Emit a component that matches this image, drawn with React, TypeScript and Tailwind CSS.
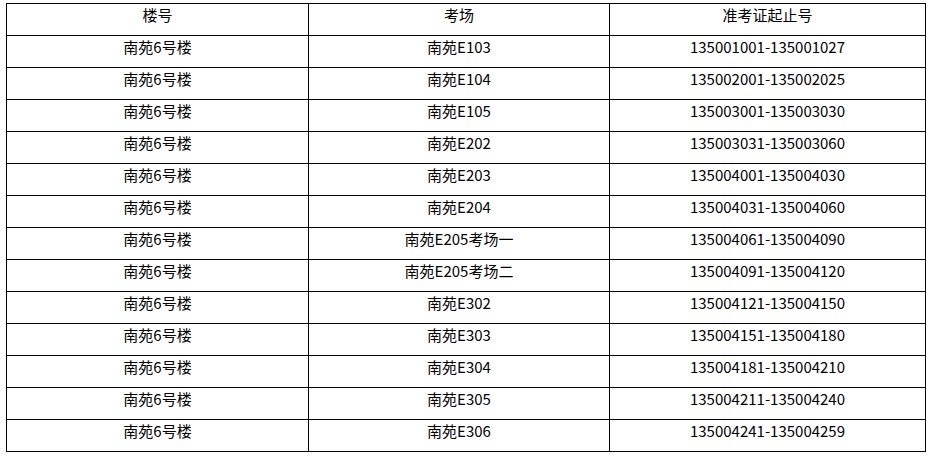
import React from "react";

const rows: [string, string, string][] = [
  ["南苑6号楼", "南苑E103", "135001001-135001027"],
  ["南苑6号楼", "南苑E104", "135002001-135002025"],
  ["南苑6号楼", "南苑E105", "135003001-135003030"],
  ["南苑6号楼", "南苑E202", "135003031-135003060"],
  ["南苑6号楼", "南苑E203", "135004001-135004030"],
  ["南苑6号楼", "南苑E204", "135004031-135004060"],
  ["南苑6号楼", "南苑E205考场一", "135004061-135004090"],
  ["南苑6号楼", "南苑E205考场二", "135004091-135004120"],
  ["南苑6号楼", "南苑E302", "135004121-135004150"],
  ["南苑6号楼", "南苑E303", "135004151-135004180"],
  ["南苑6号楼", "南苑E304", "135004181-135004210"],
  ["南苑6号楼", "南苑E305", "135004211-135004240"],
  ["南苑6号楼", "南苑E306", "135004241-135004259"],
];

const header: [string, string, string] = ["楼号", "考场", "准考证起止号"];

function Cell({ children }: { children: React.ReactNode }) {
  return (
    <div className="h-[32px] border-l border-t border-black flex justify-center items-start pt-[1px] leading-[20px] whitespace-nowrap">
      {children}
    </div>
  );
}

export default function App() {
  const all = [header, ...rows];
  return (
    <div
      className="w-[928px] h-[456px] bg-white pl-[6px] pt-[3px] text-black text-[15px]"
      style={{ fontFamily: '"Noto Sans CJK SC", "Noto Sans", sans-serif' }}
    >
      <div className="grid grid-cols-[302px_301px_316px] w-[920px] border-r border-b border-black">
        {all.map((r, i) => (
          <React.Fragment key={i}>
            <Cell>{r[0]}</Cell>
            <Cell>{r[1]}</Cell>
            <Cell>{r[2]}</Cell>
          </React.Fragment>
        ))}
      </div>
    </div>
  );
}
